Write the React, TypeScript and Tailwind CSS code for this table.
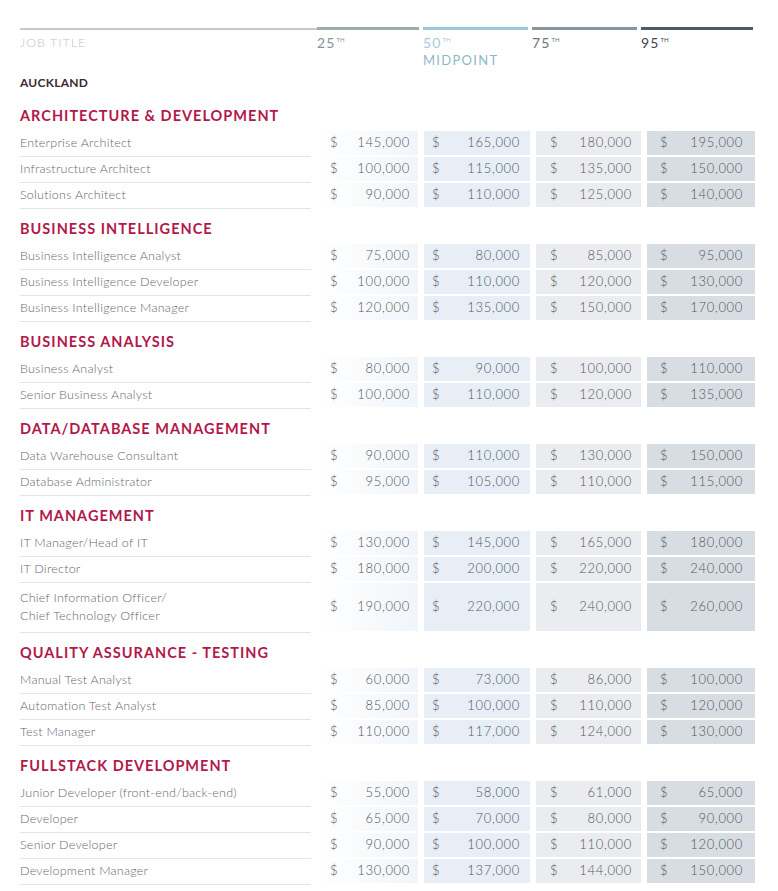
import React from "react";

type Row = { title: string[]; p25: string; p50: string; p75: string; p95: string };
type Section = { name: string; rows: Row[] };

const r = (title: string | string[], p25: string, p50: string, p75: string, p95: string): Row => ({
    title: Array.isArray(title) ? title : [title],
    p25,
    p50,
    p75,
    p95,
});

const sections: Section[] = [
    {
        name: "Architecture & Development",
        rows: [
            r("Enterprise Architect", "145,000", "165,000", "180,000", "195,000"),
            r("Infrastructure Architect", "100,000", "115,000", "135,000", "150,000"),
            r("Solutions Architect", "90,000", "110,000", "125,000", "140,000"),
        ],
    },
    {
        name: "Business Intelligence",
        rows: [
            r("Business Intelligence Analyst", "75,000", "80,000", "85,000", "95,000"),
            r("Business Intelligence Developer", "100,000", "110,000", "120,000", "130,000"),
            r("Business Intelligence Manager", "120,000", "135,000", "150,000", "170,000"),
        ],
    },
    {
        name: "Business Analysis",
        rows: [
            r("Business Analyst", "80,000", "90,000", "100,000", "110,000"),
            r("Senior Business Analyst", "100,000", "110,000", "120,000", "135,000"),
        ],
    },
    {
        name: "Data/Database Management",
        rows: [
            r("Data Warehouse Consultant", "90,000", "110,000", "130,000", "150,000"),
            r("Database Administrator", "95,000", "105,000", "110,000", "115,000"),
        ],
    },
    {
        name: "IT Management",
        rows: [
            r("IT Manager/Head of IT", "130,000", "145,000", "165,000", "180,000"),
            r("IT Director", "180,000", "200,000", "220,000", "240,000"),
            r(["Chief Information Officer/", "Chief Technology Officer"], "190,000", "220,000", "240,000", "260,000"),
        ],
    },
    {
        name: "Quality Assurance - Testing",
        rows: [
            r("Manual Test Analyst", "60,000", "73,000", "86,000", "100,000"),
            r("Automation Test Analyst", "85,000", "100,000", "110,000", "120,000"),
            r("Test Manager", "110,000", "117,000", "124,000", "130,000"),
        ],
    },
    {
        name: "Fullstack Development",
        rows: [
            r("Junior Developer (front-end/back-end)", "55,000", "58,000", "61,000", "65,000"),
            r("Developer", "65,000", "70,000", "80,000", "90,000"),
            r("Senior Developer", "90,000", "100,000", "110,000", "120,000"),
            r("Development Manager", "130,000", "137,000", "144,000", "150,000"),
        ],
    },
];

function Cell({ value, className }: { value: string; className: string }) {
    return (
        <div className={`flex items-center justify-between h-full ${className}`}>
            <span>$</span>
            <span>{value}</span>
        </div>
    );
}

function SalaryRow({ row }: { row: Row }) {
    const tall = row.title.length > 1;
    return (
        <div className={`flex gap-[6px] ${tall ? "h-[50px]" : "h-[26px]"}`}>
            <div className="w-[291px] flex flex-col justify-center border-b border-[#e3e5e9] text-[12.5px] leading-[18px] tracking-[0.02em] text-[#66686e] font-light pb-[1px]">
                {row.title.map((t) => (
                    <span key={t}>{t}</span>
                ))}
            </div>
            <div className="flex gap-[6px] pb-[2px] text-[13px] tracking-[0.05em] text-[#55585e] font-light">
                <Cell value={row.p25} className="w-[101px] pl-[13px] pr-[8px] bg-gradient-to-r from-[#ffffff] to-[#f1f5fa]" />
                <Cell value={row.p50} className="w-[106px] pl-[8px] pr-[10px] bg-[#e7eef6]" />
                <Cell value={row.p75} className="w-[105px] pl-[14px] pr-[9px] bg-[#ebecef]" />
                <Cell value={row.p95} className="w-[108px] pl-[13px] pr-[12px] bg-[#d7dde2]" />
            </div>
        </div>
    );
}

function Th({ n, color }: { n: string; color: string }) {
    return (
        <span className={`flex items-start leading-[16px] ${color}`}>
            <span className="text-[14px] tracking-[0.08em]">{n}</span>
            <span className="text-[6px] leading-[8px] ml-[1px] mt-[1px]">TH</span>
        </span>
    );
}

export default function App() {
    return (
        <div
            className="w-[778px] h-[891px] bg-white overflow-hidden px-[20px] pt-[26px]"
            style={{ fontFamily: "Lato, 'Open Sans', sans-serif" }}
        >
            {/* header bars */}
            <div className="flex items-end h-[4px]">
                <div className="w-[297px] h-[2px] bg-[#c5c9ce]" />
                <div className="w-[102px] h-[3px] bg-[#a3a9b0]" />
                <div className="w-[4px]" />
                <div className="w-[105px] h-[3px] bg-[#9ec3de]" />
                <div className="w-[4px]" />
                <div className="w-[105px] h-[3px] bg-[#8b949d]" />
                <div className="w-[4px]" />
                <div className="w-[112px] h-[3px] bg-[#4b5b69]" />
            </div>

            <div className="flex h-[44px] pt-[5px]">
                <div className="w-[297px] text-[12.5px] leading-[16px] tracking-[0.08em] text-[#bfc3ca] font-light">JOB TITLE</div>
                <div className="w-[106px]">
                    <Th n="25" color="text-[#8b9097]" />
                </div>
                <div className="w-[109px] flex flex-col">
                    <Th n="50" color="text-[#a9c8dc]" />
                    <span className="text-[13px] leading-[19px] tracking-[0.1em] text-[#8db8c9]">MIDPOINT</span>
                </div>
                <div className="w-[109px]">
                    <Th n="75" color="text-[#6f757d]" />
                </div>
                <div>
                    <Th n="95" color="text-[#3d4853]" />
                </div>
            </div>

            <div className="text-[12px] font-bold tracking-[0.02em] text-[#3b2a32] h-[22px]">AUCKLAND</div>

            {sections.map((s) => (
                <div key={s.name}>
                    <div className="mt-[10px] mb-[5px] h-[20px] flex items-center text-[14.5px] font-bold uppercase tracking-[0.07em] text-[#b2184a]">
                        {s.name}
                    </div>
                    {s.rows.map((row) => (
                        <SalaryRow key={row.title.join()} row={row} />
                    ))}
                </div>
            ))}
        </div>
    );
}
